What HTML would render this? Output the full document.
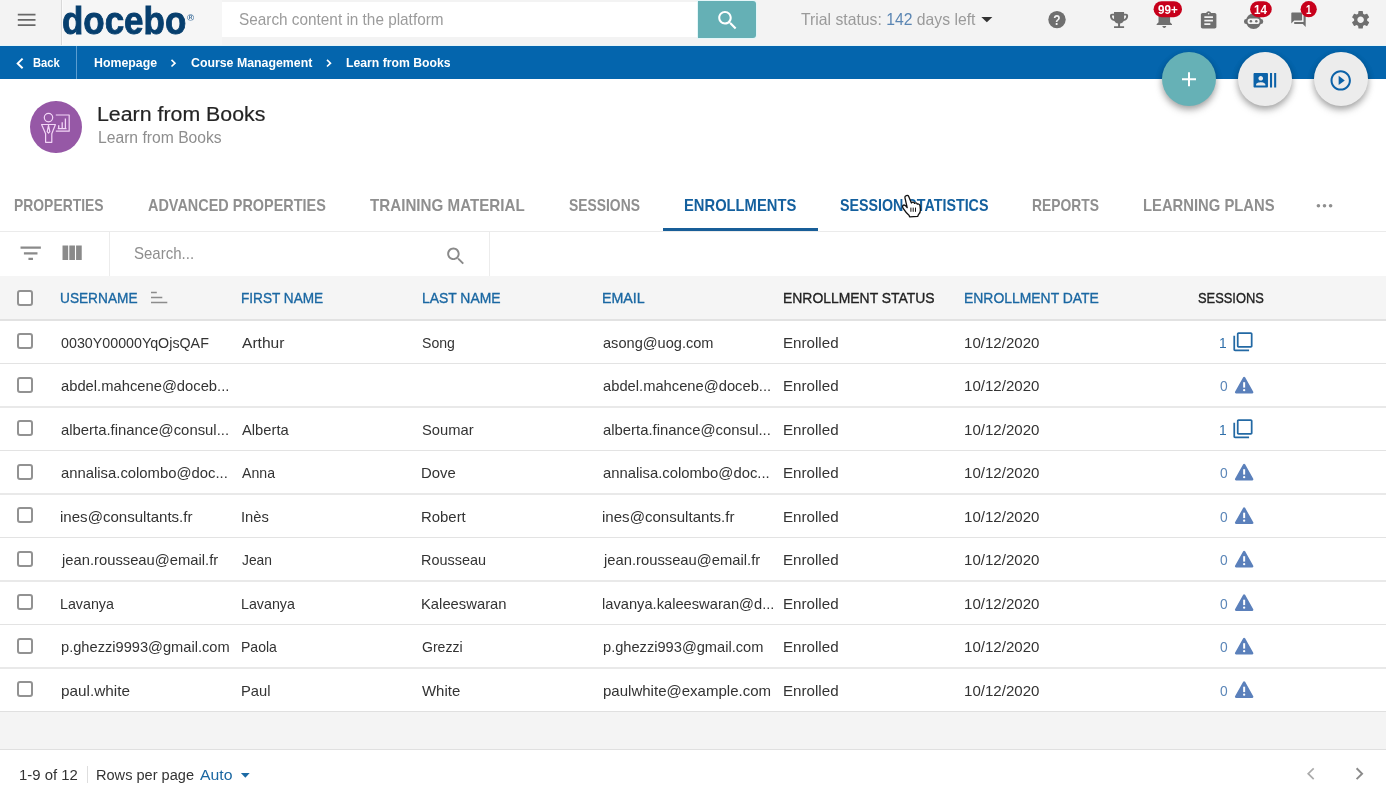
<!DOCTYPE html>
<html lang="en">
<head>
<meta charset="utf-8">
<title>Learn from Books - Enrollments</title>
<style>
*{box-sizing:border-box;margin:0;padding:0}
html,body{width:1386px;height:791px;overflow:hidden;background:#fff}
body{font-family:"Liberation Sans",sans-serif;color:#333;position:relative}
.b{position:absolute}
.t{position:absolute;white-space:nowrap;transform-origin:0 0}
#gfx{position:absolute;left:0;top:0;width:1386px;height:791px}
.fab{position:absolute;top:51.7px;width:54px;height:54px;border-radius:50%;box-shadow:0 3px 6px rgba(0,0,0,.3),0 5px 10px rgba(0,0,0,.1)}
.cb{position:absolute;left:17px;width:16px;height:16px;border:2px solid #929292;border-radius:3px;background:#fff}
.rl{position:absolute;left:0;width:1386px;height:1.4px;background:#e3e3e3}
</style>
</head>
<body>
<!-- top bar -->
<div class="b" style="left:0;top:0;width:1386px;height:46px;background:#f3f3f3"></div>
<div class="b" style="left:61px;top:0;width:161px;height:46px;background:#f6f6f6;border-left:1px solid #d9d9d9;box-shadow:inset 1px 0 0 #fbfbfb"></div>
<div class="b" style="left:222.4px;top:1.8px;width:476px;height:35.2px;background:#fff"></div>
<div class="b" style="left:698.2px;top:1.2px;width:57.4px;height:36.6px;background:#65b0b5;border-radius:0 3px 3px 0;box-shadow:0 0 0 1px #e4f6f8"></div>
<div class="b" style="left:0;top:45px;width:1386px;height:1px;background:#e6f5f8"></div>
<!-- blue bar -->
<div class="b" style="left:0;top:46px;width:1386px;height:32.6px;background:#0465ad"></div>
<div class="b" style="left:76px;top:46px;width:1.2px;height:32.6px;background:#5b9dd0"></div>
<!-- FABs -->
<div class="fab" style="left:1161.8px;background:#66b1b6"></div>
<div class="fab" style="left:1237.8px;background:#ececec"></div>
<div class="fab" style="left:1313.9px;background:#ececec"></div>
<!-- course icon -->
<div class="b" style="left:29.6px;top:100.6px;width:52.4px;height:52.8px;border-radius:50%;background:#9658a6"></div>
<!-- tabs underline -->
<div class="b" style="left:0;top:231px;width:1386px;height:1.2px;background:#ebebeb"></div>
<div class="b" style="left:662.5px;top:227.8px;width:155.3px;height:3.2px;background:#185e98"></div>
<!-- toolbar separators -->
<div class="b" style="left:109px;top:232px;width:1.2px;height:44px;background:#ececec"></div>
<div class="b" style="left:489px;top:232px;width:1.2px;height:44px;background:#ececec"></div>
<!-- table header -->
<div class="b" style="left:0;top:275.8px;width:1386px;height:43px;background:#f5f5f5"></div>
<div class="b" style="left:0;top:318.8px;width:1386px;height:2.2px;background:#e2e2e2"></div>
<div class="cb" style="top:290px"></div>
<div class="cb" style="top:333px"></div>
<div class="rl" style="top:363px;height:1px;background:#e3e3e3"></div>
<div class="cb" style="top:377px"></div>
<div class="rl" style="top:406px;height:2px;background:#e9e9e9"></div>
<div class="cb" style="top:420px"></div>
<div class="rl" style="top:450px;height:1px;background:#e3e3e3"></div>
<div class="cb" style="top:464px"></div>
<div class="rl" style="top:493px;height:2px;background:#e9e9e9"></div>
<div class="cb" style="top:507px"></div>
<div class="rl" style="top:537px;height:1px;background:#e3e3e3"></div>
<div class="cb" style="top:551px"></div>
<div class="rl" style="top:580px;height:2px;background:#e9e9e9"></div>
<div class="cb" style="top:594px"></div>
<div class="rl" style="top:624px;height:1px;background:#e3e3e3"></div>
<div class="cb" style="top:638px"></div>
<div class="rl" style="top:667px;height:2px;background:#e9e9e9"></div>
<div class="cb" style="top:681px"></div>
<!-- footer band -->
<div class="b" style="left:0;top:711.4px;width:1386px;height:38.4px;background:#f4f4f4;border-top:1.2px solid #e0e0e0;border-bottom:1.2px solid #e0e0e0"></div>
<div class="b" style="left:87px;top:765.5px;width:1.2px;height:17px;background:#dedede"></div>

<svg id="gfx" style="will-change:transform" viewBox="0 0 1386 791">
<!-- hamburger -->
<path d="M17.8 14.7h17.7M17.8 19.9h17.7M17.8 25.1h17.7" stroke="#686868" stroke-width="1.8" fill="none"/>
<!-- registered mark ring -->
<text x="187" y="20.6" font-size="9.6" font-weight="bold" fill="#3f6f9c">®</text>
<!-- search (white) -->
<g transform="translate(715.1 7.9) scale(1.04)" fill="#fff"><path d="M15.5 14h-.79l-.28-.27C15.41 12.59 16 11.11 16 9.5 16 5.91 13.09 3 9.5 3S3 5.91 3 9.5 5.91 16 9.5 16c1.61 0 3.09-.59 4.23-1.57l.27.28v.79l5 4.99L20.49 19l-4.99-5zm-6 0C7.01 14 5 11.99 5 9.5S7.01 5 9.5 5 14 7.01 14 9.5 11.99 14 9.5 14z"/></g>
<!-- trial dropdown arrow -->
<path d="M981.3 16.9h11.1l-5.55 5.4z" fill="#333"/>
<!-- help -->
<circle cx="1057" cy="19.6" r="8.7" fill="#6f6f6f"/>
<text x="0" y="0" font-size="14.5" font-weight="bold" fill="#f3f3f3" text-anchor="middle" transform="translate(1057 24.8) scale(.82 1)">?</text>
<!-- trophy -->
<g transform="translate(1107 9.3) scale(1.005 .895)" fill="#6f6f6f"><path d="M19 5h-2V3H7v2H5c-1.1 0-2 .9-2 2v1c0 2.55 1.92 4.63 4.39 4.94.63 1.5 1.98 2.63 3.61 2.96V19H7v2h10v-2h-4v-3.1c1.63-.33 2.98-1.46 3.61-2.96C19.08 12.63 21 10.55 21 8V7c0-1.1-.9-2-2-2zM5 8V7h2v3.82C5.84 10.4 5 9.3 5 8zm14 0c0 1.3-.84 2.4-2 2.82V7h2v1z"/></g>
<!-- bell -->
<g transform="translate(1152.75 6.8) scale(.9625)" fill="#6f6f6f"><path d="M12 22c1.1 0 2-.9 2-2h-4c0 1.1.89 2 2 2zm6-6v-5c0-3.07-1.64-5.64-4.5-6.32V4c0-.83-.67-1.5-1.5-1.5s-1.5.67-1.5 1.5v.68C7.63 5.36 6 7.92 6 11v5l-2 2v1h16v-1l-2-2z"/></g>
<rect x="1153.6" y="1.2" width="28.4" height="16" rx="8" fill="#c7001b"/>
<!-- clipboard -->
<g transform="translate(1198.3 10.3) scale(.862)" fill="#6f6f6f"><path d="M19 3h-4.18C14.4 1.840 13.3 1 12 1c-1.3 0-2.4.84-2.820 2H5c-1.1 0-2 .9-2 2v14c0 1.1.9 2 2 2h14c1.1 0 2-.9 2-2V5c0-1.1-.9-2-2-2zm-7 0c.55 0 1 .45 1 1s-.45 1-1 1-1-.45-1-1 .45-1 1-1zm2 14H7v-2h7v2zm3-4H7v-2h10v2zm0-4H7V7h10v2z"/></g>
<!-- robot -->
<g fill="#6f6f6f"><circle cx="1253.6" cy="21.3" r="7.7"/><rect x="1244" y="19" width="19.2" height="5" rx="2.2"/></g>
<rect x="1247.6" y="18.6" width="12" height="5.4" rx="2.6" fill="#f3f3f3"/>
<circle cx="1250.9" cy="21.3" r="1.25" fill="#6f6f6f"/><circle cx="1256.3" cy="21.3" r="1.25" fill="#6f6f6f"/>
<rect x="1250.1" y="1.2" width="21.6" height="16" rx="8" fill="#c7001b"/>
<!-- chat -->
<g transform="translate(1289.86 11.16) scale(.72)" fill="#6f6f6f"><path d="M21 6h-2v9H6v2c0 .55.45 1 1 1h11l4 4V7c0-.55-.45-1-1-1zm-4 6V3c0-.55-.45-1-1-1H3c-.55 0-1 .45-1 1v14l4-4h10c.55 0 1-.45 1-1z"/></g>
<circle cx="1308.7" cy="9.2" r="8.1" fill="#c7001b"/>
<!-- gear -->
<g transform="translate(1349.7 8.9) scale(.91)" fill="#6f6f6f"><path d="M19.14 12.94c.04-.3.06-.61.06-.94 0-.32-.02-.64-.07-.94l2.030-1.580c.18-.14.23-.41.12-.61l-1.920-3.320c-.12-.22-.37-.29-.59-.22l-2.390.96c-.5-.38-1.030-.7-1.620-.94l-.36-2.540c-.04-.24-.24-.41-.48-.41h-3.840c-.24 0-.43.17-.47.41l-.36 2.540c-.59.24-1.130.57-1.620.94l-2.390-.96c-.22-.08-.47 0-.59.22L2.740 8.870c-.12.21-.08.47.12.61l2.030 1.580c-.05.3-.09.63-.09.94s.02.64.07.94l-2.030 1.580c-.18.14-.23.41-.12.61l1.920 3.320c.12.22.37.29.59.22l2.390-.96c.5.38 1.030.7 1.620.94l.36 2.540c.05.24.24.41.48.41h3.840c.24 0 .44-.17.47-.41l.36-2.540c.59-.24 1.130-.56 1.620-.94l2.390.96c.22.08.47 0 .59-.22l1.920-3.320c.12-.22.07-.47-.12-.61l-2.010-1.580zM12 15.6c-1.980 0-3.600-1.620-3.600-3.600s1.620-3.600 3.600-3.600 3.600 1.620 3.600 3.600-1.620 3.600-3.600 3.600z"/></g>
<!-- back chevron + breadcrumb chevrons -->
<path d="M22.6 58.6l-4.9 4.8 4.9 4.8" stroke="#fff" stroke-width="2" fill="none"/>
<path d="M171.5 59.9l3.5 3.3-3.5 3.3" stroke="#fff" stroke-width="1.6" fill="none"/>
<path d="M327 59.900l3.500 3.300-3.500 3.300" stroke="#fff" stroke-width="1.600" fill="none"/>
<!-- FAB icons -->
<path d="M1182 79.3h14M1189 72.300v14" stroke="#fff" stroke-width="2" fill="none"/>
<g transform="translate(1252.5 67.9) scale(1.03)" fill="#0c62a8"><path d="M21 5v14h2V5h-2zm-4 14h2V5h-2v14zM14 5H2c-.55 0-1 .45-1 1v12c0 .55.45 1 1 1h12c.55 0 1-.45 1-1V6c0-.55-.45-1-1-1zM8 7.750c1.240 0 2.250 1.010 2.250 2.250S9.240 12.250 8 12.250 5.750 11.240 5.750 10 6.760 7.750 8 7.750zM12.500 17h-9v-.75c0-1.500 3-2.250 4.500-2.250s4.500.75 4.500 2.250V17z"/></g>
<g transform="translate(1328.46 68.16) scale(1.02)" fill="#0c62a8"><path d="M10 16.500l6-4.500-6-4.500v9zM12 2C6.480 2 2 6.480 2 12s4.480 10 10 10 10-4.480 10-10S17.520 2 12 2zm0 18c-4.410 0-8-3.590-8-8s3.590-8 8-8 8 3.590 8 8-3.590 8-8 8z"/></g>
<!-- course icon glyph -->
<g fill="none" stroke="#f3d6f7" stroke-width="1.2" stroke-linejoin="round">
<circle cx="48.5" cy="117.6" r="4.2"/>
<path d="M41.6 124.500h13.800l-3.600 9.300v8.500h-6.200v-8.500z"/>
<path d="M48.500 125.300l-1.300 6.400 1.300 1.400 1.300-1.400z"/>
<path d="M55.800 115h13.400v16.200h-13.400"/>
<path d="M57.700 128.700h8.800M58.700 128.700v-3.400M62.200 128.700v-6.500M65.400 128.700v-10.200" stroke-width="1.3"/>
</g>
<!-- more dots -->
<g fill="#8f8f8f"><circle cx="1318.4" cy="205.800" r="1.800"/><circle cx="1324.5" cy="205.800" r="1.800"/><circle cx="1330.6" cy="205.800" r="1.800"/></g>
<!-- filter + columns -->
<g transform="translate(17.14 239.7) scale(1.13)" fill="#8a8a8a"><path d="M10 18h4v-2h-4v2zM3 6v2h18V6H3zm3 7h12v-2H6v2z" transform="translate(0 0)"/></g>
<g transform="translate(58 240.100) scale(1.13 1.100)" fill="#8a8a8a"><path d="M10 18h5V5h-5v13zm-6 0h5V5H4v13zM16 5v13h5V5h-5z"/></g>
<!-- search gray -->
<g transform="translate(444.300 244.700) scale(.96)" fill="#8a8a8a"><path d="M15.500 14h-.79l-.28-.27C15.410 12.590 16 11.110 16 9.500 16 5.910 13.090 3 9.500 3S3 5.910 3 9.500 5.910 16 9.500 16c1.610 0 3.090-.59 4.230-1.570l.27.28v.79l5 4.990L20.490 19l-4.990-5zm-6 0C7.010 14 5 11.990 5 9.500S7.010 5 9.500 5 14 7.010 14 9.500 11.990 14 9.500 14z"/></g>
<!-- sort icon -->
<path d="M151 292.600h5.800M151 297.600h11.300M151 302.600h16.300" stroke="#8c8c8c" stroke-width="1.500" fill="none"/>
<g transform="translate(1232.5 331.3) scale(.872)" fill="#2369a4"><path d="M3 5H1v16c0 1.100.9 2 2 2h16v-2H3V5zm18-4H7c-1.100 0-2 .9-2 2v14c0 1.100.9 2 2 2h14c1.100 0 2-.9 2-2V3c0-1.100-.9-2-2-2zm0 16H7V3h14v14z"/></g>
<g transform="translate(1234.700 376.6)"><path d="M9.450 1.300l8.150 14.400h-16.300z" fill="#5b80bb" stroke="#5b80bb" stroke-width="2.200" stroke-linejoin="round"/><path d="M9.450 5.600v5.400" stroke="#fff" stroke-width="2" fill="none"/><circle cx="9.450" cy="13.600" r="1.150" fill="#fff"/></g>
<g transform="translate(1232.5 418.3) scale(.872)" fill="#2369a4"><path d="M3 5H1v16c0 1.100.9 2 2 2h16v-2H3V5zm18-4H7c-1.100 0-2 .9-2 2v14c0 1.100.9 2 2 2h14c1.100 0 2-.9 2-2V3c0-1.100-.9-2-2-2zm0 16H7V3h14v14z"/></g>
<g transform="translate(1234.700 463.6)"><path d="M9.450 1.300l8.150 14.400h-16.300z" fill="#5b80bb" stroke="#5b80bb" stroke-width="2.200" stroke-linejoin="round"/><path d="M9.450 5.600v5.400" stroke="#fff" stroke-width="2" fill="none"/><circle cx="9.450" cy="13.600" r="1.150" fill="#fff"/></g>
<g transform="translate(1234.700 507.1)"><path d="M9.450 1.300l8.150 14.400h-16.300z" fill="#5b80bb" stroke="#5b80bb" stroke-width="2.200" stroke-linejoin="round"/><path d="M9.450 5.600v5.400" stroke="#fff" stroke-width="2" fill="none"/><circle cx="9.450" cy="13.600" r="1.150" fill="#fff"/></g>
<g transform="translate(1234.700 550.6)"><path d="M9.450 1.300l8.150 14.400h-16.300z" fill="#5b80bb" stroke="#5b80bb" stroke-width="2.200" stroke-linejoin="round"/><path d="M9.450 5.600v5.400" stroke="#fff" stroke-width="2" fill="none"/><circle cx="9.450" cy="13.600" r="1.150" fill="#fff"/></g>
<g transform="translate(1234.700 594.1)"><path d="M9.450 1.300l8.150 14.400h-16.300z" fill="#5b80bb" stroke="#5b80bb" stroke-width="2.200" stroke-linejoin="round"/><path d="M9.450 5.600v5.400" stroke="#fff" stroke-width="2" fill="none"/><circle cx="9.450" cy="13.600" r="1.150" fill="#fff"/></g>
<g transform="translate(1234.700 637.6)"><path d="M9.450 1.300l8.150 14.400h-16.300z" fill="#5b80bb" stroke="#5b80bb" stroke-width="2.200" stroke-linejoin="round"/><path d="M9.450 5.600v5.400" stroke="#fff" stroke-width="2" fill="none"/><circle cx="9.450" cy="13.600" r="1.150" fill="#fff"/></g>
<g transform="translate(1234.700 681.1)"><path d="M9.450 1.300l8.150 14.400h-16.300z" fill="#5b80bb" stroke="#5b80bb" stroke-width="2.200" stroke-linejoin="round"/><path d="M9.450 5.600v5.400" stroke="#fff" stroke-width="2" fill="none"/><circle cx="9.450" cy="13.600" r="1.150" fill="#fff"/></g>
<!-- footer arrows -->
<path d="M240.900 773h8.800l-4.400 4.800z" fill="#1b6aa5"/>
<path d="M1313.700 768.300l-5.500 5.400 5.500 5.400" stroke="#ababab" stroke-width="1.700" fill="none"/>
<path d="M1356.600 768.300l5.500 5.400-5.500 5.400" stroke="#8a8a8a" stroke-width="1.900" fill="none"/>

</svg>
<div id="tx" style="position:absolute;left:0;top:0;width:1386px;height:791px;will-change:transform">
<div class="t" style="left:62.11px;top:-4.89px;font-size:39.2px;line-height:51px;color:#073f6e;transform:scaleX(0.8916);-webkit-text-stroke:.9px #073f6e;font-weight:700;">docebo</div>
<div class="t" style="left:238.70px;top:9.24px;font-size:16.6px;line-height:22px;color:#9b9b9b;transform:scaleX(0.9240);">Search content in the platform</div>
<div class="t" style="left:800.70px;top:8.68px;font-size:16.5px;line-height:21px;color:#9a9a9a;transform:scaleX(0.9540);white-space:pre;"><span style="color:#9a9a9a">Trial status: </span><span style="color:#5b86b3">142</span><span style="color:#9a9a9a"> days left</span></div>
<div class="t" style="left:32.90px;top:54.39px;font-size:13px;line-height:17px;color:#fff;transform:scaleX(0.8603);font-weight:700;">Back</div>
<div class="t" style="left:93.90px;top:54.39px;font-size:13px;line-height:17px;color:#fff;transform:scaleX(0.9482);font-weight:700;">Homepage</div>
<div class="t" style="left:190.50px;top:54.39px;font-size:13px;line-height:17px;color:#fff;transform:scaleX(0.9484);font-weight:700;">Course Management</div>
<div class="t" style="left:345.70px;top:54.39px;font-size:13px;line-height:17px;color:#fff;transform:scaleX(0.9395);font-weight:700;">Learn from Books</div>
<div class="t" style="left:97.43px;top:100.77px;font-size:20px;line-height:26px;color:#242424;transform:scaleX(1.0666);-webkit-text-stroke:.2px #242424;">Learn from Books</div>
<div class="t" style="left:97.52px;top:126.75px;font-size:16px;line-height:21px;color:#8e8e8e;transform:scaleX(0.9794);">Learn from Books</div>
<div class="t" style="left:13.84px;top:194.78px;font-size:16.2px;line-height:21px;color:#8f8f8f;transform:scaleX(0.8586);font-weight:700;">PROPERTIES</div>
<div class="t" style="left:147.80px;top:194.78px;font-size:16.2px;line-height:21px;color:#8f8f8f;transform:scaleX(0.8919);font-weight:700;">ADVANCED PROPERTIES</div>
<div class="t" style="left:370.20px;top:194.78px;font-size:16.2px;line-height:21px;color:#8f8f8f;transform:scaleX(0.9367);font-weight:700;">TRAINING MATERIAL</div>
<div class="t" style="left:568.90px;top:194.78px;font-size:16.2px;line-height:21px;color:#8f8f8f;transform:scaleX(0.8570);font-weight:700;">SESSIONS</div>
<div class="t" style="left:683.59px;top:194.78px;font-size:16.2px;line-height:21px;color:#14609e;transform:scaleX(0.9109);font-weight:700;">ENROLLMENTS</div>
<div class="t" style="left:840.20px;top:194.78px;font-size:16.2px;line-height:21px;color:#14609e;transform:scaleX(0.8809);font-weight:700;">SESSION STATISTICS</div>
<div class="t" style="left:1032.35px;top:194.78px;font-size:16.2px;line-height:21px;color:#8f8f8f;transform:scaleX(0.8547);font-weight:700;">REPORTS</div>
<div class="t" style="left:1143.39px;top:194.78px;font-size:16.2px;line-height:21px;color:#8f8f8f;transform:scaleX(0.9141);font-weight:700;">LEARNING PLANS</div>
<div class="t" style="left:134.30px;top:242.94px;font-size:16.6px;line-height:22px;color:#8e8e8e;transform:scaleX(0.9043);">Search...</div>
<div class="t" style="left:60.00px;top:287.73px;font-size:15.2px;line-height:20px;color:#1a67a2;transform:scaleX(0.9006);-webkit-text-stroke:.35px #1a67a2;">USERNAME</div>
<div class="t" style="left:241.00px;top:287.73px;font-size:15.2px;line-height:20px;color:#1a67a2;transform:scaleX(0.8961);-webkit-text-stroke:.35px #1a67a2;">FIRST NAME</div>
<div class="t" style="left:421.69px;top:287.73px;font-size:15.2px;line-height:20px;color:#1a67a2;transform:scaleX(0.9146);-webkit-text-stroke:.35px #1a67a2;">LAST NAME</div>
<div class="t" style="left:602.26px;top:287.73px;font-size:15.2px;line-height:20px;color:#1a67a2;transform:scaleX(0.9381);-webkit-text-stroke:.35px #1a67a2;">EMAIL</div>
<div class="t" style="left:782.78px;top:287.73px;font-size:15.2px;line-height:20px;color:#222;transform:scaleX(0.9165);-webkit-text-stroke:.35px #222;">ENROLLMENT STATUS</div>
<div class="t" style="left:963.68px;top:287.73px;font-size:15.2px;line-height:20px;color:#1a67a2;transform:scaleX(0.9168);-webkit-text-stroke:.35px #1a67a2;">ENROLLMENT DATE</div>
<div class="t" style="left:1197.80px;top:287.73px;font-size:15.2px;line-height:20px;color:#222;transform:scaleX(0.8475);-webkit-text-stroke:.35px #222;">SESSIONS</div>
<div class="t" style="left:60.80px;top:332.60px;font-size:15px;line-height:20px;color:#333;transform:scaleX(0.9515);">0030Y00000YqOjsQAF</div>
<div class="t" style="left:241.50px;top:332.60px;font-size:15px;line-height:20px;color:#333;transform:scaleX(1.0379);">Arthur</div>
<div class="t" style="left:422.30px;top:332.60px;font-size:15px;line-height:20px;color:#333;transform:scaleX(0.9398);">Song</div>
<div class="t" style="left:603.00px;top:332.60px;font-size:15px;line-height:20px;color:#333;transform:scaleX(0.9723);">asong@uog.com</div>
<div class="t" style="left:782.69px;top:332.60px;font-size:15px;line-height:20px;color:#333;transform:scaleX(1.0095);">Enrolled</div>
<div class="t" style="left:964.19px;top:332.60px;font-size:15px;line-height:20px;color:#333;transform:scaleX(1.0050);">10/12/2020</div>
<div class="t" style="left:1219.38px;top:332.60px;font-size:15px;line-height:20px;color:#2f6faa;transform:scaleX(0.9200);">1</div>
<div class="t" style="left:60.80px;top:376.10px;font-size:15px;line-height:20px;color:#333;transform:scaleX(0.9835);">abdel.mahcene@doceb...</div>
<div class="t" style="left:603.00px;top:376.10px;font-size:15px;line-height:20px;color:#333;transform:scaleX(0.9823);">abdel.mahcene@doceb...</div>
<div class="t" style="left:782.69px;top:376.10px;font-size:15px;line-height:20px;color:#333;transform:scaleX(1.0095);">Enrolled</div>
<div class="t" style="left:964.19px;top:376.10px;font-size:15px;line-height:20px;color:#333;transform:scaleX(1.0050);">10/12/2020</div>
<div class="t" style="left:1219.60px;top:376.10px;font-size:15px;line-height:20px;color:#5b86b8;transform:scaleX(0.9200);">0</div>
<div class="t" style="left:60.80px;top:419.60px;font-size:15px;line-height:20px;color:#333;transform:scaleX(0.9916);">alberta.finance@consul...</div>
<div class="t" style="left:241.50px;top:419.60px;font-size:15px;line-height:20px;color:#333;transform:scaleX(0.9837);">Alberta</div>
<div class="t" style="left:422.30px;top:419.60px;font-size:15px;line-height:20px;color:#333;transform:scaleX(0.9824);">Soumar</div>
<div class="t" style="left:603.00px;top:419.60px;font-size:15px;line-height:20px;color:#333;transform:scaleX(0.9904);">alberta.finance@consul...</div>
<div class="t" style="left:782.69px;top:419.60px;font-size:15px;line-height:20px;color:#333;transform:scaleX(1.0095);">Enrolled</div>
<div class="t" style="left:964.19px;top:419.60px;font-size:15px;line-height:20px;color:#333;transform:scaleX(1.0050);">10/12/2020</div>
<div class="t" style="left:1219.38px;top:419.60px;font-size:15px;line-height:20px;color:#2f6faa;transform:scaleX(0.9200);">1</div>
<div class="t" style="left:60.80px;top:463.10px;font-size:15px;line-height:20px;color:#333;transform:scaleX(0.9893);">annalisa.colombo@doc...</div>
<div class="t" style="left:241.50px;top:463.10px;font-size:15px;line-height:20px;color:#333;transform:scaleX(0.9415);">Anna</div>
<div class="t" style="left:421.31px;top:463.10px;font-size:15px;line-height:20px;color:#333;transform:scaleX(0.9918);">Dove</div>
<div class="t" style="left:603.00px;top:463.10px;font-size:15px;line-height:20px;color:#333;transform:scaleX(0.9881);">annalisa.colombo@doc...</div>
<div class="t" style="left:782.69px;top:463.10px;font-size:15px;line-height:20px;color:#333;transform:scaleX(1.0095);">Enrolled</div>
<div class="t" style="left:964.19px;top:463.10px;font-size:15px;line-height:20px;color:#333;transform:scaleX(1.0050);">10/12/2020</div>
<div class="t" style="left:1219.60px;top:463.10px;font-size:15px;line-height:20px;color:#5b86b8;transform:scaleX(0.9200);">0</div>
<div class="t" style="left:59.80px;top:506.60px;font-size:15px;line-height:20px;color:#333;transform:scaleX(1.0041);">ines@consultants.fr</div>
<div class="t" style="left:240.52px;top:506.60px;font-size:15px;line-height:20px;color:#333;transform:scaleX(0.9832);">Inès</div>
<div class="t" style="left:421.31px;top:506.60px;font-size:15px;line-height:20px;color:#333;transform:scaleX(0.9943);">Robert</div>
<div class="t" style="left:602.00px;top:506.60px;font-size:15px;line-height:20px;color:#333;transform:scaleX(1.0041);">ines@consultants.fr</div>
<div class="t" style="left:782.69px;top:506.60px;font-size:15px;line-height:20px;color:#333;transform:scaleX(1.0095);">Enrolled</div>
<div class="t" style="left:964.19px;top:506.60px;font-size:15px;line-height:20px;color:#333;transform:scaleX(1.0050);">10/12/2020</div>
<div class="t" style="left:1219.60px;top:506.60px;font-size:15px;line-height:20px;color:#5b86b8;transform:scaleX(0.9200);">0</div>
<div class="t" style="left:61.78px;top:550.10px;font-size:15px;line-height:20px;color:#333;transform:scaleX(0.9847);">jean.rousseau@email.fr</div>
<div class="t" style="left:241.50px;top:550.10px;font-size:15px;line-height:20px;color:#333;transform:scaleX(0.9200);">Jean</div>
<div class="t" style="left:421.34px;top:550.10px;font-size:15px;line-height:20px;color:#333;transform:scaleX(0.9622);">Rousseau</div>
<div class="t" style="left:603.98px;top:550.10px;font-size:15px;line-height:20px;color:#333;transform:scaleX(0.9847);">jean.rousseau@email.fr</div>
<div class="t" style="left:782.69px;top:550.10px;font-size:15px;line-height:20px;color:#333;transform:scaleX(1.0095);">Enrolled</div>
<div class="t" style="left:964.19px;top:550.10px;font-size:15px;line-height:20px;color:#333;transform:scaleX(1.0050);">10/12/2020</div>
<div class="t" style="left:1219.60px;top:550.10px;font-size:15px;line-height:20px;color:#5b86b8;transform:scaleX(0.9200);">0</div>
<div class="t" style="left:59.85px;top:593.60px;font-size:15px;line-height:20px;color:#333;transform:scaleX(0.9509);">Lavanya</div>
<div class="t" style="left:240.55px;top:593.60px;font-size:15px;line-height:20px;color:#333;transform:scaleX(0.9509);">Lavanya</div>
<div class="t" style="left:421.31px;top:593.60px;font-size:15px;line-height:20px;color:#333;transform:scaleX(0.9862);">Kaleeswaran</div>
<div class="t" style="left:602.02px;top:593.60px;font-size:15px;line-height:20px;color:#333;transform:scaleX(0.9788);">lavanya.kaleeswaran@d...</div>
<div class="t" style="left:782.69px;top:593.60px;font-size:15px;line-height:20px;color:#333;transform:scaleX(1.0095);">Enrolled</div>
<div class="t" style="left:964.19px;top:593.60px;font-size:15px;line-height:20px;color:#333;transform:scaleX(1.0050);">10/12/2020</div>
<div class="t" style="left:1219.60px;top:593.60px;font-size:15px;line-height:20px;color:#5b86b8;transform:scaleX(0.9200);">0</div>
<div class="t" style="left:60.80px;top:637.10px;font-size:15px;line-height:20px;color:#333;transform:scaleX(0.9761);">p.ghezzi9993@gmail.com</div>
<div class="t" style="left:240.56px;top:637.10px;font-size:15px;line-height:20px;color:#333;transform:scaleX(0.9363);">Paola</div>
<div class="t" style="left:422.30px;top:637.10px;font-size:15px;line-height:20px;color:#333;transform:scaleX(0.9371);">Grezzi</div>
<div class="t" style="left:603.00px;top:637.10px;font-size:15px;line-height:20px;color:#333;transform:scaleX(0.9751);">p.ghezzi993@gmail.com</div>
<div class="t" style="left:782.69px;top:637.10px;font-size:15px;line-height:20px;color:#333;transform:scaleX(1.0095);">Enrolled</div>
<div class="t" style="left:964.19px;top:637.10px;font-size:15px;line-height:20px;color:#333;transform:scaleX(1.0050);">10/12/2020</div>
<div class="t" style="left:1219.60px;top:637.10px;font-size:15px;line-height:20px;color:#5b86b8;transform:scaleX(0.9200);">0</div>
<div class="t" style="left:60.80px;top:680.60px;font-size:15px;line-height:20px;color:#333;transform:scaleX(1.0208);">paul.white</div>
<div class="t" style="left:240.52px;top:680.60px;font-size:15px;line-height:20px;color:#333;transform:scaleX(0.9829);">Paul</div>
<div class="t" style="left:422.30px;top:680.60px;font-size:15px;line-height:20px;color:#333;transform:scaleX(0.9974);">White</div>
<div class="t" style="left:603.00px;top:680.60px;font-size:15px;line-height:20px;color:#333;transform:scaleX(1.0017);">paulwhite@example.com</div>
<div class="t" style="left:782.69px;top:680.60px;font-size:15px;line-height:20px;color:#333;transform:scaleX(1.0095);">Enrolled</div>
<div class="t" style="left:964.19px;top:680.60px;font-size:15px;line-height:20px;color:#333;transform:scaleX(1.0050);">10/12/2020</div>
<div class="t" style="left:1219.60px;top:680.60px;font-size:15px;line-height:20px;color:#5b86b8;transform:scaleX(0.9200);">0</div>
<div class="t" style="left:19.02px;top:765.13px;font-size:15.2px;line-height:20px;color:#333;transform:scaleX(0.9812);">1-9 of 12</div>
<div class="t" style="left:95.94px;top:765.13px;font-size:15.2px;line-height:20px;color:#333;transform:scaleX(0.9592);">Rows per page</div>
<div class="t" style="left:200.20px;top:765.13px;font-size:15.2px;line-height:20px;color:#1a67a2;transform:scaleX(1.0391);">Auto</div>
<div class="t" style="left:1157.70px;top:0.89px;font-size:13px;line-height:17px;color:#fff;transform:scaleX(0.8949);font-weight:700;">99+</div>
<div class="t" style="left:1254.20px;top:0.89px;font-size:13px;line-height:17px;color:#fff;transform:scaleX(0.8930);font-weight:700;">14</div>
<div class="t" style="left:1305.80px;top:0.89px;font-size:13px;line-height:17px;color:#fff;transform:scaleX(0.7429);font-weight:700;">1</div>
</div>
<svg class="b" style="left:0;top:0;width:1386px;height:791px" viewBox="0 0 1386 791">
<path d="M904.9 197.6C904.5 195.600 907.9 194.600 908.6 196.300L911.4 203C912.2 201.800 914.2 202 914.5 203.400C915.3 202.400 917.1 202.800 917.3 204.200C918.2 203.600 919.8 204.300 920 205.800L920.4 210C920.6 212.500 919 214 918.2 215L917.8 216.400L909.6 216.900L909.2 215.600C907.5 214.200 905 211.200 903.2 208.400C902 206.600 902.6 205 904 205C905.2 205 906.2 206.200 907.2 207.600Z" fill="#fff" stroke="#111" stroke-width="1.300" stroke-linejoin="round"/>
<path d="M910.900 207.600v4.200M913.200 207.600v4.200M915.500 207.600v4.200" stroke="#111" stroke-width="1" fill="none"/>
</svg>
</body>
</html>
